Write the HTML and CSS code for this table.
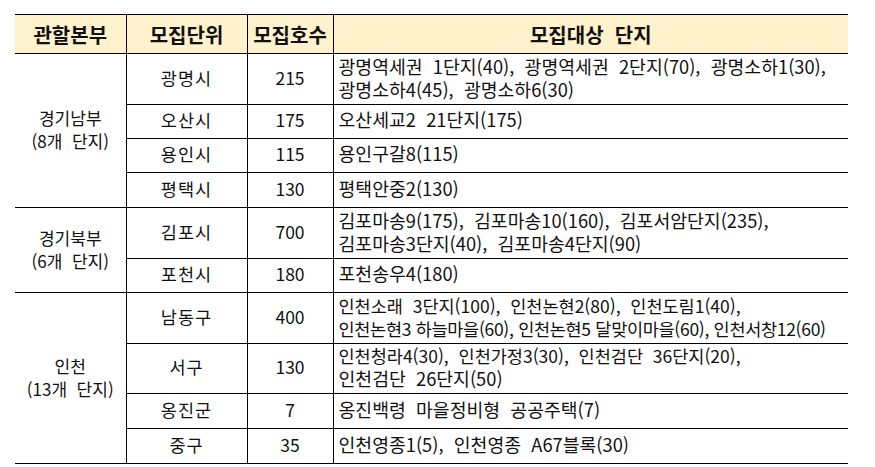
FILE: index.html
```html
<!DOCTYPE html>
<html lang="ko">
<head>
<meta charset="utf-8">
<link rel="stylesheet" href="styles.css">
</head>
<body>
<table class="grid">
  <colgroup>
    <col class="c1"><col class="c2"><col class="c3"><col class="c4">
  </colgroup>
  <thead>
    <tr class="head">
      <th>관할본부</th><th>모집단위</th><th>모집호수</th><th>모집대상&nbsp; 단지</th>
    </tr>
  </thead>
  <tbody>
    <tr class="h51">
      <td class="region" rowspan="4">경기남부<br>(8개&nbsp; 단지)</td>
      <td class="unit">광명시</td><td>215</td>
      <td class="list two">광명역세권&nbsp; 1단지(40),&nbsp; 광명역세권&nbsp; 2단지(70),&nbsp; 광명소하1(30),<br>광명소하4(45),&nbsp; 광명소하6(30)</td>
    </tr>
    <tr class="h34"><td class="unit">오산시</td><td>175</td><td class="list">오산세교2&nbsp; 21단지(175)</td></tr>
    <tr class="h34"><td class="unit">용인시</td><td>115</td><td class="list">용인구갈8(115)</td></tr>
    <tr class="h35"><td class="unit">평택시</td><td>130</td><td class="list">평택안중2(130)</td></tr>
    <tr class="h51">
      <td class="region" rowspan="2">경기북부<br>(6개&nbsp; 단지)</td>
      <td class="unit">김포시</td><td>700</td>
      <td class="list two">김포마송9(175),&nbsp; 김포마송10(160),&nbsp; 김포서암단지(235),<br>김포마송3단지(40),&nbsp; 김포마송4단지(90)</td>
    </tr>
    <tr class="h34"><td class="unit">포천시</td><td>180</td><td class="list">포천송우4(180)</td></tr>
    <tr class="h51">
      <td class="region" rowspan="4">인천<br>(13개&nbsp; 단지)</td>
      <td class="unit">남동구</td><td>400</td>
      <td class="list two"><span class="fit">인천소래&nbsp; 3단지(100),&nbsp; 인천논현2(80),&nbsp; 인천도림1(40),</span><br><span class="squeeze">인천논현3 하늘마을(60), 인천논현5 달맞이마을(60), 인천서창12(60)</span></td>
    </tr>
    <tr class="h50"><td class="unit">서구</td><td>130</td><td class="list two"><span class="fit">인천청라4(30),&nbsp; 인천가정3(30),&nbsp; 인천검단&nbsp; 36단지(20),</span><br>인천검단&nbsp; 26단지(50)</td></tr>
    <tr class="h35"><td class="unit">옹진군</td><td>7</td><td class="list">옹진백령&nbsp; 마을정비형&nbsp; 공공주택(7)</td></tr>
    <tr class="h35"><td class="unit">중구</td><td>35</td><td class="list">인천영종1(5),&nbsp; 인천영종&nbsp; A67블록(30)</td></tr>
  </tbody>
</table>
</body>
</html>
```

FILE: styles.css
```css
html, body {
  margin: 0;
  padding: 0;
  background: #ffffff;
}
body {
  padding: 14px 0 0 15px;
  font-family: "Noto Sans CJK KR", "Noto Sans", sans-serif;
  color: #111;
}
.grid {
  border-collapse: collapse;
  table-layout: fixed;
  width: 833px;
}
.c1 { width: 111px; }
.c2 { width: 121px; }
.c3 { width: 86px; }
.c4 { width: 515px; }
.grid th, .grid td {
  border: 1px solid #000;
  padding: 0;
  text-align: center;
  vertical-align: middle;
  font-size: 17.5px;
  line-height: 23px;
  font-weight: 400;
  white-space: nowrap;
}
.grid td { padding-bottom: 4px; }
.grid tr > :first-child { border-left: none; }
.grid tr > :last-child { border-right: none; }
.grid td.region { border-left: none; font-size: 17px; padding-bottom: 3px; }
.head { height: 39px; background: #fff2cc; }
.head th { font-weight: 700; font-size: 20px; }
.h51 { height: 51px; }
.h50 { height: 50px; }
.h34 { height: 34px; }
.h35 { height: 35px; }
.unit { letter-spacing: 1px; }
.grid td.list {
  text-align: left;
  padding-left: 5px;
  font-size: 18.3px;
}
.grid td.two { padding-bottom: 3px; line-height: 23px; }
.fit { font-size: 17.5px; }
.squeeze { font-size: 17.5px; letter-spacing: -0.3px; }
```
